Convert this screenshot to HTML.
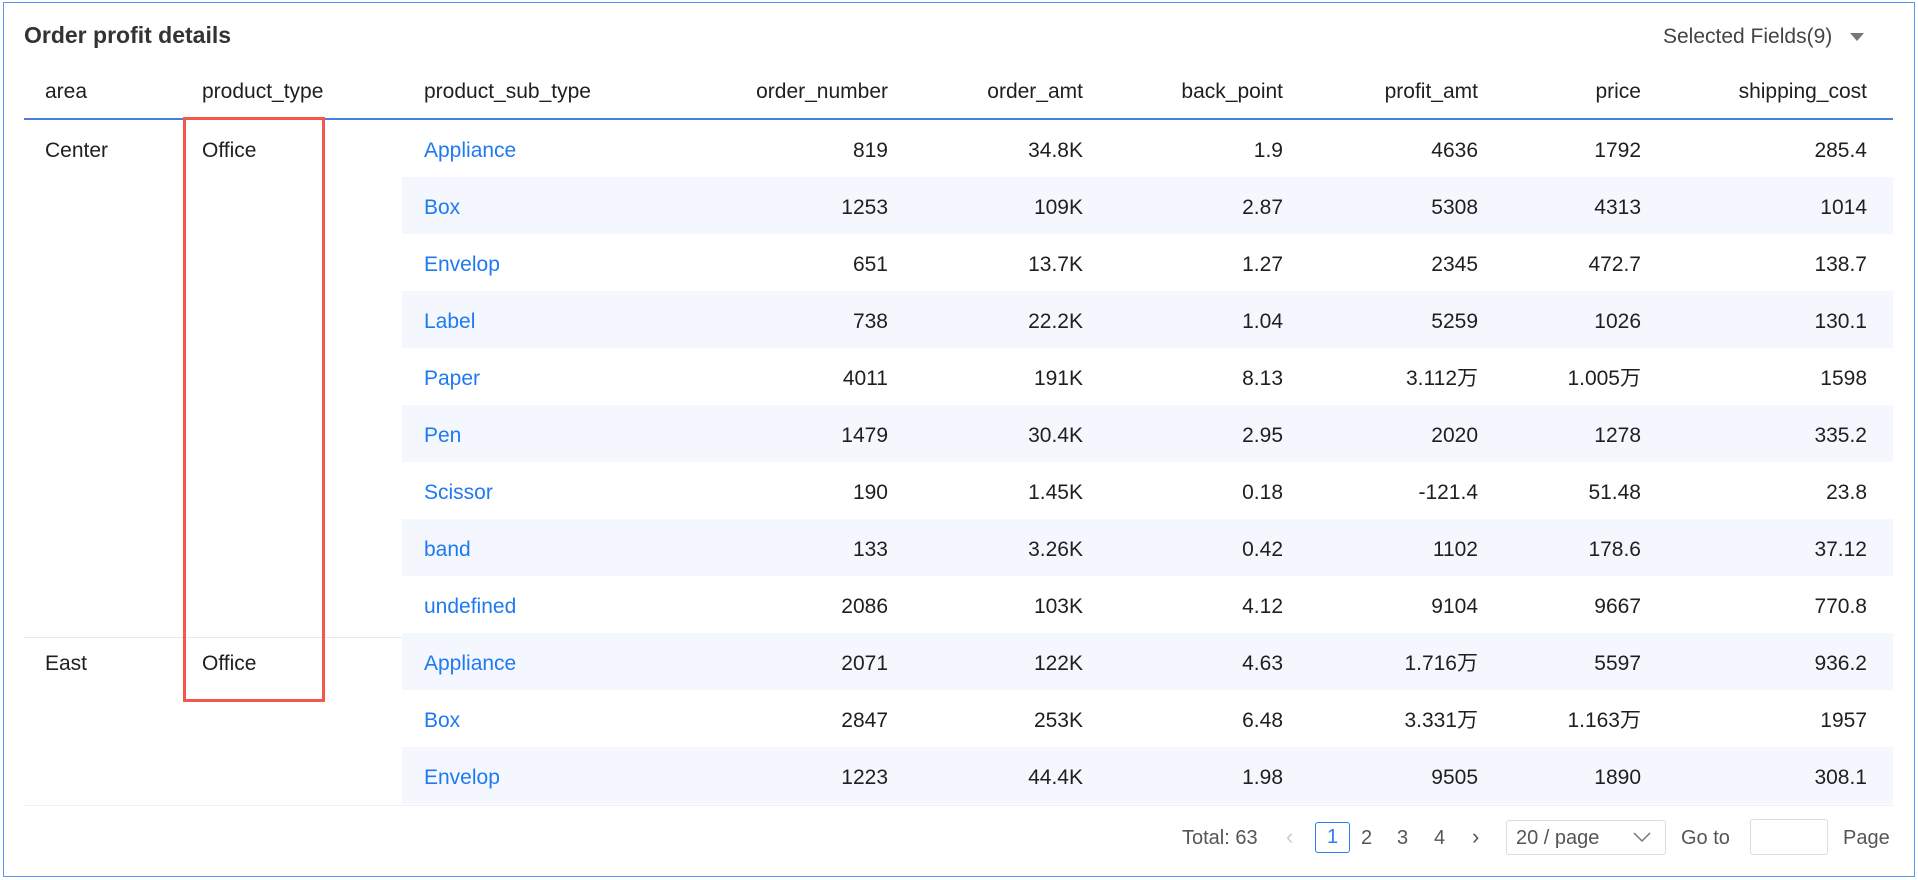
<!DOCTYPE html>
<html><head><meta charset="utf-8"><style>
*{margin:0;padding:0;box-sizing:border-box}
body{width:1918px;height:880px;background:#fff;font-family:"Liberation Sans","Noto Sans CJK SC",sans-serif;color:#1f1f1f;position:relative;overflow:hidden}
.frame{position:absolute;left:3px;top:2px;width:1912px;height:875px;border:1.5px solid #5b93f3}
.t{position:absolute;font-size:21px;line-height:24px;white-space:nowrap}
.r{text-align:right}
.b{color:#1f7af0}
.stripe{position:absolute;left:402px;width:1491px;height:57px;background:#f4f7fe}
</style></head><body>
<div class="frame"></div>
<div class="t" style="left:24px;top:23px;font-size:23px;font-weight:bold;color:#333">Order profit details</div>
<div class="t" style="left:1663px;top:25px;font-size:21px;color:#444">Selected Fields(9)</div>
<svg style="position:absolute;left:1850px;top:33px" width="14" height="9"><path d="M0 0H14L7 8Z" fill="#777"/></svg>
<div style="position:absolute;left:24px;top:118px;width:1869px;height:1.5px;background:#4a7fe0"></div>
<div id="rows"></div>
<div style="position:absolute;left:24px;top:637px;width:378px;height:1px;background:#e8e8e8"></div>
<div style="position:absolute;left:24px;top:805px;width:1869px;height:1px;background:#f0f0f0"></div>
<div style="position:absolute;left:183px;top:117px;width:142px;height:585px;border:3px solid #f5574b"></div>
<div class="t" style="left:1182px;top:826px;font-size:20px;color:#555">Total: 63</div>
<div class="t" style="left:1286px;top:825px;font-size:22px;color:#ccc">‹</div>
<div style="position:absolute;left:1315px;top:822px;width:35px;height:31px;border:1.5px solid #2f7cf0;border-radius:3px;color:#2f7cf0;font-size:20px;text-align:center;line-height:28px">1</div>
<div class="t" style="left:1361px;top:826px;font-size:20px;color:#555">2</div>
<div class="t" style="left:1397px;top:826px;font-size:20px;color:#555">3</div>
<div class="t" style="left:1434px;top:826px;font-size:20px;color:#555">4</div>
<div class="t" style="left:1472px;top:825px;font-size:22px;color:#555">›</div>
<div style="position:absolute;left:1506px;top:820px;width:160px;height:35px;border:1px solid #ddd;border-radius:3px"></div>
<div class="t" style="left:1516px;top:826px;font-size:20px;color:#555">20 / page</div>
<svg style="position:absolute;left:1633px;top:832px" width="18" height="11"><path d="M1 1L9 9L17 1" fill="none" stroke="#777" stroke-width="1.5"/></svg>
<div class="t" style="left:1681px;top:826px;font-size:20px;color:#555">Go to</div>
<div style="position:absolute;left:1750px;top:819px;width:78px;height:36px;border:1px solid #ddd;border-radius:3px"></div>
<div class="t" style="left:1843px;top:826px;font-size:20px;color:#555">Page</div>
<script>
const H=[["area",45,0],["product_type",202,0],["product_sub_type",424,0],["order_number",888,1],["order_amt",1083,1],["back_point",1283,1],["profit_amt",1478,1],["price",1641,1],["shipping_cost",1867,1]];
const D=[["Center","Office","Appliance","819","34.8K","1.9","4636","1792","285.4"],
["","","Box","1253","109K","2.87","5308","4313","1014"],
["","","Envelop","651","13.7K","1.27","2345","472.7","138.7"],
["","","Label","738","22.2K","1.04","5259","1026","130.1"],
["","","Paper","4011","191K","8.13","3.112万","1.005万","1598"],
["","","Pen","1479","30.4K","2.95","2020","1278","335.2"],
["","","Scissor","190","1.45K","0.18","-121.4","51.48","23.8"],
["","","band","133","3.26K","0.42","1102","178.6","37.12"],
["","","undefined","2086","103K","4.12","9104","9667","770.8"],
["East","Office","Appliance","2071","122K","4.63","1.716万","5597","936.2"],
["","","Box","2847","253K","6.48","3.331万","1.163万","1957"],
["","","Envelop","1223","44.4K","1.98","9505","1890","308.1"]];
let h="";
function cell(txt,c,y,cls){return c[2]?`<div class="t r ${cls}" style="right:${1918-c[1]}px;top:${y}px">${txt}</div>`:`<div class="t ${cls}" style="left:${c[1]}px;top:${y}px">${txt}</div>`}
H.forEach(c=>h+=cell(c[0],c,80,""));
D.forEach((r,i)=>{const top=120+i*57;if(i%2==1)h+=`<div class="stripe" style="top:${top}px"></div>`;
r.forEach((v,j)=>{if(v)h+=cell(v,H[j],top+19,j==2?"b":"")})});
document.getElementById("rows").innerHTML=h;
</script>
</body></html>
